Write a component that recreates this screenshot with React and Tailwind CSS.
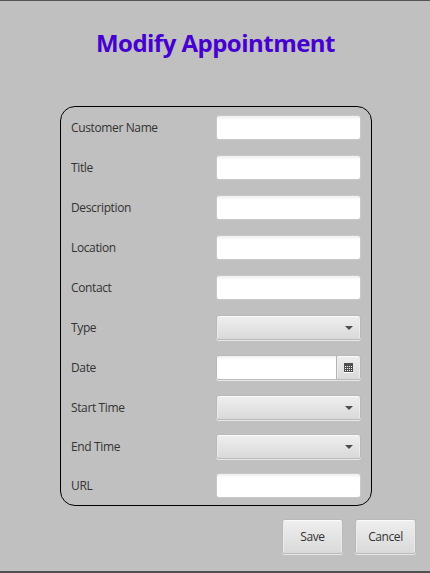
const fields = [
  { label: "Customer Name", kind: "text" },
  { label: "Title", kind: "text" },
  { label: "Description", kind: "text" },
  { label: "Location", kind: "text" },
  { label: "Contact", kind: "text" },
  { label: "Type", kind: "combo" },
  { label: "Date", kind: "date" },
  { label: "Start Time", kind: "combo" },
  { label: "End Time", kind: "combo" },
  { label: "URL", kind: "text" },
];

const raised =
  "border border-t-[#fafafa] border-x-[#ececec] border-b-[#dadada] bg-linear-to-b from-[#eeeeee] to-[#dadada]";
const edge = "shadow-[0_0_0_1px_#b9b9b9,0_1px_0_1px_#e9e9e9]";

function TextField() {
  return (
    <div className="h-[23px] w-[143px] rounded-[2px] bg-white bg-linear-to-b from-[#eeeeee] to-white to-[4px] shadow-[0_0_0_1px_#c8c8c8]" />
  );
}

function Combo() {
  return (
    <div className={`flex h-[23px] w-[143px] items-center justify-end rounded-[2px] pr-[6px] ${raised} ${edge}`}>
      <svg width="8" height="4" viewBox="0 0 8 4" className="mt-px">
        <path d="M0 0H8L4 4Z" fill="#4d4d4d" />
      </svg>
    </div>
  );
}

function CalendarIcon() {
  const cells = [];
  for (let r = 0; r < 3; r++) for (let c = 0; c < 4; c++) cells.push([1 + c * 2, 3 + r * 2]);
  return (
    <svg width="9" height="10" viewBox="0 0 9 10" shapeRendering="crispEdges" className="mt-px">
      <path d="M0 9H9V10H0Z" fill="#ffffff" />
      <path d="M0 0H9V9H0Z" fill="#4d4d4d" />
      {cells.map(([x, y]) => (
        <rect key={`${x}-${y}`} x={x} y={y} width="1" height="1" fill="#f4f4f4" />
      ))}
    </svg>
  );
}

function DateField() {
  return (
    <div className={`flex h-[23px] w-[143px] rounded-[2px] ${edge}`}>
      <div className="w-[119px] rounded-l-[2px] bg-white bg-linear-to-b from-[#eeeeee] to-white to-[4px]" />
      <div className="w-px bg-[#b5b5b5]" />
      <div className={`flex w-[23px] items-center justify-center rounded-r-[2px] ${raised}`}>
        <CalendarIcon />
      </div>
    </div>
  );
}

function Control({ kind }) {
  if (kind === "combo") return <Combo />;
  if (kind === "date") return <DateField />;
  return <TextField />;
}

function Button({ children }) {
  return (
    <button
      type="button"
      className={`flex h-[33px] w-[59px] items-center justify-center rounded-[2px] text-[12px] tracking-[-0.4px] text-[#333333] ${raised} ${edge}`}
    >
      {children}
    </button>
  );
}

export default function App() {
  return (
    <div className="flex h-[573px] w-[430px] flex-col border-t border-b-2 border-t-[#555355] border-b-[#505050] bg-[#c0c0c0] font-['Open_Sans','Noto_Sans',sans-serif] text-[#333333]">
      <h1 className="mt-[26px] pl-[1px] text-center text-[24px] leading-[32px] font-bold tracking-[-0.52px] whitespace-nowrap text-[#4600d0]">
        Modify Appointment
      </h1>
      <div className="mt-[47px] ml-[60px] h-[400px] w-[312px] rounded-[15px] border border-black pt-[9px] pl-[10px]">
        {fields.map(({ label, kind }, i) => (
          <div key={label} className={`flex items-start ${i < 7 ? "h-[40px]" : "h-[39px]"}`}>
            <span className="w-[146px] pt-[4px] text-[12px] leading-[16px] tracking-[-0.37px]">{label}</span>
            <Control kind={kind} />
          </div>
        ))}
      </div>
      <div className="mt-[14px] flex gap-[14px] pl-[283px]">
        <Button>Save</Button>
        <Button>Cancel</Button>
      </div>
    </div>
  );
}
